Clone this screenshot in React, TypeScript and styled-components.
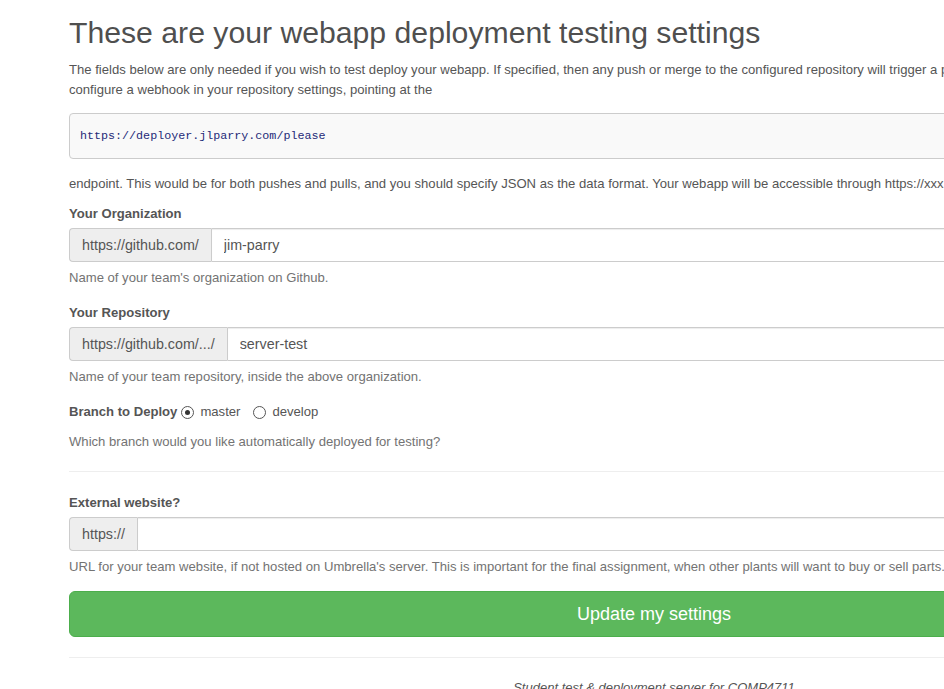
import React from 'react';
import styled, { createGlobalStyle } from 'styled-components';

const Global = createGlobalStyle`
  html, body {
    margin: 0;
    padding: 0;
    overflow: hidden;
    background: #ffffff;
  }
  body {
    font-family: "Liberation Sans", Arial, Helvetica, sans-serif;
    font-size: 13.1px;
    line-height: 20px;
    color: #555555;
  }
  * { box-sizing: border-box; }
`

const Page = styled.div`
  display: flex;
  flex-direction: column;
  width: 1239px;
  padding: 16px 0 0 69px;
`

const Title = styled.h1`
  margin: 0 0 11px;
  font-size: 30.2px;
  line-height: 33px;
  font-weight: 400;
  color: #4f4f4f;
`

const Para = styled.p<{ $gap?: number }>`
  margin: 0 0 ${p => p.$gap ?? 10}px;
  white-space: nowrap;
`

const Pre = styled.pre`
  margin: 0 0 15px;
  padding: 12px 10px 10px;
  height: 46px;
  font-family: "Liberation Mono", "DejaVu Sans Mono", monospace;
  font-size: 11.7px;
  line-height: 21px;
  color: #1e2a78;
  background: #f9f9f9;
  border: 1px solid #cccccc;
  border-radius: 4px;
`

const FormGroup = styled.div<{ $gap?: number }>`
  margin-bottom: ${p => p.$gap ?? 15}px;
`

const Label = styled.label`
  display: block;
  margin-bottom: 4px;
  font-weight: 700;
`

const InlineRow = styled.div`
  display: flex;
  align-items: center;
  height: 20px;
`

const InlineLabel = styled.span`
  font-weight: 700;
  margin-right: 1px;
`

const RadioLabel = styled.label`
  display: inline-flex;
  align-items: center;
  margin-right: 10px;
`

const Radio = styled.input`
  appearance: none;
  -webkit-appearance: none;
  position: relative;
  width: 13px;
  height: 13px;
  margin: 0 6px 0 3px;
  border: 1px solid #555555;
  border-radius: 50%;
  background: #ffffff;

  &:checked::after {
    content: "";
    position: absolute;
    top: 3px;
    left: 3px;
    width: 5px;
    height: 5px;
    border-radius: 50%;
    background: #333333;
  }
`

const InputGroup = styled.div`
  display: flex;
  height: 34px;
`

const Addon = styled.span`
  display: flex;
  align-items: center;
  padding: 0 12px;
  font-size: 14.3px;
  color: #555555;
  background: #eeeeee;
  border: 1px solid #cccccc;
  border-right: none;
  border-radius: 4px 0 0 4px;
  white-space: nowrap;
`

const Input = styled.input`
  flex: 1;
  height: 34px;
  padding: 6px 12px;
  font-family: inherit;
  font-size: 14.3px;
  color: #555555;
  background: #ffffff;
  border: 1px solid #cccccc;
  border-radius: 0 4px 4px 0;
  box-shadow: inset 0 1px 1px rgba(0, 0, 0, 0.075);
  outline: none;
`

const Help = styled.div<{ $top?: number }>`
  margin-top: ${p => p.$top ?? 6}px;
  color: #737373;
  white-space: nowrap;
`

const Rule = styled.hr<{ $top: number; $bottom: number }>`
  width: 100%;
  margin: ${p => p.$top}px 0 ${p => p.$bottom}px;
  border: 0;
  border-top: 1px solid #eeeeee;
`

const SubmitButton = styled.button`
  display: block;
  width: 100%;
  height: 46px;
  padding: 10px 16px;
  font-family: inherit;
  font-size: 18px;
  line-height: 24px;
  color: #ffffff;
  background: #5cb85c;
  border: 1px solid #4cae4c;
  border-radius: 6px;
  cursor: pointer;
`

const Footer = styled.footer`
  text-align: center;
  font-style: italic;
  font-size: 13px;
  color: #555555;
`

interface FieldProps {
  label: string;
  prefix: string;
  value: string;
  help: string;
  gap?: number;
}

const PrefixedField: React.FC<FieldProps> = ({ label, prefix, value, help, gap }) => (
  <FormGroup $gap={gap}>
    <Label>{label}</Label>
    <InputGroup>
      <Addon>{prefix}</Addon>
      <Input type="text" defaultValue={value} />
    </InputGroup>
    <Help>{help}</Help>
  </FormGroup>
)

const App: React.FC = () => {
  return <>
    <Global />
    <Page>
      <Title>These are your webapp deployment testing settings</Title>
      <Para $gap={13}>
        The fields below are only needed if you wish to test deploy your webapp. If specified, then any push or merge to the configured repository will trigger a push to our server.<br />
        configure a webhook in your repository settings, pointing at the
      </Para>
      <Pre>https://deployer.jlparry.com/please</Pre>
      <Para>endpoint. This would be for both pushes and pulls, and you should specify JSON as the data format. Your webapp will be accessible through https://xxx.jlparry.com</Para>

      <PrefixedField
        label="Your Organization"
        prefix="https://github.com/"
        value="jim-parry"
        help="Name of your team's organization on Github."
      />
      <PrefixedField
        label="Your Repository"
        prefix="https://github.com/.../"
        value="server-test"
        help="Name of your team repository, inside the above organization."
      />

      <FormGroup>
        <InlineRow>
          <InlineLabel>Branch to Deploy</InlineLabel>
          <RadioLabel><Radio type="radio" name="branch" defaultChecked />master</RadioLabel>
          <RadioLabel><Radio type="radio" name="branch" />develop</RadioLabel>
        </InlineRow>
        <Help $top={10}>Which branch would you like automatically deployed for testing?</Help>
      </FormGroup>

      <Rule $top={4} $bottom={21} />

      <PrefixedField
        label="External website?"
        prefix="https://"
        value=""
        help="URL for your team website, if not hosted on Umbrella's server. This is important for the final assignment, when other plants will want to buy or sell parts."
        gap={14}
      />

      <SubmitButton type="button">Update my settings</SubmitButton>

      <Rule $top={20} $bottom={20} />

      <Footer>Student test &amp; deployment server for COMP4711</Footer>
    </Page>
  </>
}

export default App;
